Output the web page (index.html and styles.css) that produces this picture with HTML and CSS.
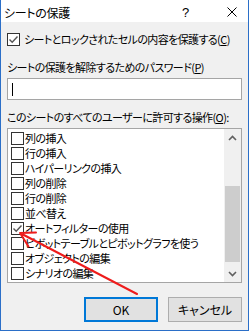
FILE: index.html
```html
<!DOCTYPE html>
<html lang="ja">
<head>
<meta charset="utf-8">
<link rel="stylesheet" href="styles.css">
</head>
<body>
<div class="window">
  <div class="titlebar">
    <span class="title">シートの保護</span>
    <span class="help">?</span>
    <svg class="close" width="10" height="10" viewBox="0 0 10 10"><path d="M0.5 0.5 L9.5 9.5 M9.5 0.5 L0.5 9.5" stroke="#000" stroke-width="1" fill="none"/></svg>
  </div>
  <div class="content">
    <div class="row-check">
      <span class="box checked"><svg width="11" height="11" viewBox="0 0 11 11"><path d="M1.5 5.5 L4.2 8.2 L9.5 2.5" stroke="#555" stroke-width="1.4" fill="none"/></svg></span>
      <span class="lbl">シートとロックされたセルの内容を保護する(<u>C</u>)</span>
    </div>
    <div class="label pw">シートの保護を解除するためのパスワード(<u>P</u>)</div>
    <div class="input"><span class="caret"></span></div>
    <div class="label perm">このシートのすべてのユーザーに許可する操作(<u>O</u>):</div>
    <div class="list">
      <div class="items">
        <div class="item"><span class="box"></span><span class="lbl">列の挿入</span></div>
        <div class="item"><span class="box"></span><span class="lbl">行の挿入</span></div>
        <div class="item"><span class="box"></span><span class="lbl">ハイパーリンクの挿入</span></div>
        <div class="item"><span class="box"></span><span class="lbl">列の削除</span></div>
        <div class="item"><span class="box"></span><span class="lbl">行の削除</span></div>
        <div class="item"><span class="box"></span><span class="lbl">並べ替え</span></div>
        <div class="item"><span class="box checked"><svg width="11" height="11" viewBox="0 0 11 11"><path d="M1.5 5.5 L4.2 8.2 L9.5 2.5" stroke="#555" stroke-width="1.4" fill="none"/></svg></span><span class="lbl">オートフィルターの使用</span></div>
        <div class="item"><span class="box"></span><span class="lbl">ピボットテーブルとピボットグラフを使う</span></div>
        <div class="item"><span class="box"></span><span class="lbl">オブジェクトの編集</span></div>
        <div class="item"><span class="box"></span><span class="lbl">シナリオの編集</span></div>
      </div>
      <div class="scrollbar">
        <div class="arrow"><svg width="9" height="6" viewBox="0 0 9 6"><path d="M1 5 L4.5 1.5 L8 5" stroke="#606060" stroke-width="1.6" fill="none"/></svg></div>
        <div class="track"><div class="thumb"></div></div>
        <div class="arrow"><svg width="9" height="6" viewBox="0 0 9 6"><path d="M1 1 L4.5 4.5 L8 1" stroke="#606060" stroke-width="1.6" fill="none"/></svg></div>
      </div>
    </div>
    <div class="buttons">
      <div class="btn default">OK</div>
      <div class="btn">キャンセル</div>
    </div>
  </div>
  <svg class="annot" width="249" height="331" viewBox="0 0 249 331">
    <path d="M137 294 L20 233 M20 233 L36 232.5 M20 233 L28.5 246.5" stroke="#ee1c1c" stroke-width="2" fill="none" stroke-linecap="round"/>
  </svg>
</div>
</body>
</html>
```
FILE: styles.css
```css
html, body {
  margin: 0;
  padding: 0;
  background: #f0f0f0;
}
body {
  font-family: "Noto Sans CJK JP", "Noto Sans", sans-serif;
  font-feature-settings: "palt";
  font-size: 11px;
  letter-spacing: -0.6px;
  color: #000;
}
.window {
  position: relative;
  width: 249px;
  height: 331px;
  box-sizing: border-box;
  border-left: 1px solid #2b6fc8;
  border-right: 1px solid #2b6fc8;
  border-bottom: 1px solid #2b6fc8;
  background: #f0f0f0;
  overflow: hidden;
}
.titlebar {
  height: 22px;
  background: #fff;
  display: flex;
  align-items: center;
  padding-left: 3px;
  padding-top: 2px;
  box-sizing: border-box;
}
.title {
  flex: 1;
  font-size: 12px;
  letter-spacing: -0.3px;
}
.help {
  font-family: "Liberation Sans", sans-serif;
  font-size: 13px;
  width: 8px;
  margin-right: 37px;
  letter-spacing: 0;
}
.close {
  margin-right: 11px;
}
.content {
  padding: 0 6px;
  display: flex;
  flex-direction: column;
}
.row-check {
  margin-top: 7px;
  height: 21px;
  display: flex;
  align-items: center;
  gap: 4px;
}
.box {
  width: 13px;
  height: 13px;
  box-sizing: border-box;
  border: 1px solid #333;
  background: #fff;
  display: flex;
  align-items: center;
  justify-content: center;
  flex: none;
}
.lbl {
  line-height: 15px;
  white-space: nowrap;
}
.label {
  height: 18px;
  line-height: 18px;
  white-space: nowrap;
}
.label.pw {
  margin-top: 8px;
}
.input {
  margin-top: 2px;
  height: 22px;
  box-sizing: border-box;
  border: 1px solid #a5a5a5;
  background: #fff;
  position: relative;
}
.caret {
  position: absolute;
  left: 4px;
  top: 4px;
  width: 1px;
  height: 13px;
  background: #000;
}
.label.perm {
  margin-top: 8px;
  height: 19px;
  line-height: 19px;
}
.list {
  margin-top: 1px;
  height: 155px;
  box-sizing: border-box;
  border: 1px solid #a5a5a5;
  background: #fff;
  display: flex;
}
.items {
  flex: 1;
  padding-top: 2px;
  padding-left: 3px;
  overflow: hidden;
}
.item {
  height: 15px;
  display: flex;
  align-items: center;
  gap: 1px;
}
.scrollbar {
  width: 17px;
  background: #f0f0f0;
  display: flex;
  flex-direction: column;
}
.arrow {
  height: 17px;
  display: flex;
  align-items: center;
  justify-content: center;
}
.track {
  flex: 1;
  padding: 40px 1px 1px 1px;
}
.thumb {
  height: 76px;
  background: #cdcdcd;
}
.buttons {
  margin-top: 14px;
  display: flex;
  justify-content: flex-end;
  gap: 10px;
}
.btn {
  width: 74px;
  height: 25px;
  box-sizing: border-box;
  border: 1px solid #adadad;
  background: #e1e1e1;
  display: flex;
  align-items: center;
  justify-content: center;
  font-size: 12px;
  letter-spacing: 0;
}
.btn.default {
  border: 2px solid #0078d7;
}
.annot {
  position: absolute;
  left: -1px;
  top: 0;
  pointer-events: none;
}
```
